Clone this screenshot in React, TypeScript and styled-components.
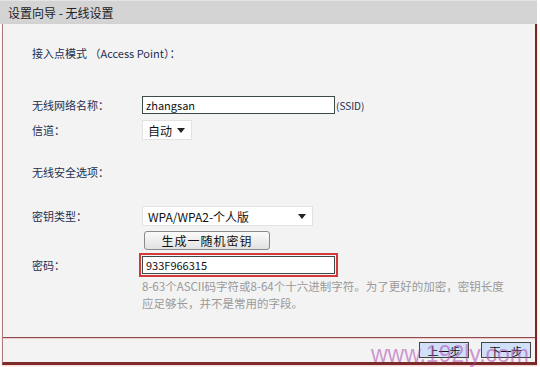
import * as React from 'react'
import styled, { createGlobalStyle } from 'styled-components'

const GlobalStyle = createGlobalStyle`
  html, body {
    margin: 0;
    padding: 0;
    background: #ffffff;
  }
  body {
    font-family: "SimSun", "Noto Sans CJK SC", "Liberation Sans", sans-serif;
  }
`

const Page = styled.div`
  width: 540px;
  height: 367px;
  position: relative;
  overflow: hidden;
  background: #ffffff;
`

const TitleBar = styled.div`
  width: 537px;
  height: 24px;
  box-sizing: border-box;
  background: #d4d4d4;
  border-top: 1px solid #e4e4e4;
  padding-left: 8px;
  display: flex;
  align-items: center;
  font-size: 12px;
  color: #222;
`

const Frame = styled.div`
  padding-left: 2px;
`

const Panel = styled.div`
  width: 535px;
  box-sizing: border-box;
  background: #f3f3f3;
  border-left: 1px solid #b07a7a;
  border-right: 2px solid #7c2424;
  border-bottom: 3px solid #7c2a2a;
  box-shadow: 0 1px 2px rgba(230, 150, 150, 0.5);
  display: flex;
  flex-direction: column;
`

const Content = styled.div`
  height: 313px;
  box-sizing: border-box;
  padding-left: 29px;
  display: flex;
  flex-direction: column;
`

const Row = styled.div<{ $top: number; $h: number }>`
  margin-top: ${(p) => p.$top}px;
  height: ${(p) => p.$h}px;
  display: grid;
  grid-template-columns: 110px 1fr;
  align-items: center;
`

const Label = styled.div`
  font-size: 11px;
  color: #1c2f50;
  white-space: nowrap;
`

const Field = styled.div`
  display: flex;
  align-items: center;
  height: 100%;
`

const TextBox = styled.div<{ $w: number }>`
  width: ${(p) => p.$w}px;
  height: 100%;
  box-sizing: border-box;
  background: #fff;
  border: 1px solid #3c4a4a;
  display: flex;
  align-items: center;
  padding-left: 3px;
  font-size: 11px;
  color: #111;
`

const Suffix = styled.span`
  font-size: 10px;
  color: #1c2f50;
  margin-left: 1px;
`

const Select = styled.div<{ $w: number }>`
  width: ${(p) => p.$w}px;
  height: 100%;
  box-sizing: border-box;
  background: #fff;
  border: 1px solid #e2e2e2;
  display: flex;
  align-items: center;
  justify-content: space-between;
  padding: 0 6px 0 5px;
  font-size: 12px;
  color: #111;
`

const Caret = styled.span`
  width: 0;
  height: 0;
  border-left: 4px solid transparent;
  border-right: 4px solid transparent;
  border-top: 5px solid #222;
`

const GenButton = styled.button`
  margin-left: 2px;
  width: 126px;
  height: 100%;
  box-sizing: border-box;
  border: 1px solid #8a8a8a;
  border-radius: 3px;
  background: linear-gradient(#fafafa, #e2e2e2);
  font-family: inherit;
  font-size: 12px;
  letter-spacing: 1px;
  color: #111;
  padding: 0;
`

const Highlight = styled.div`
  margin-left: -3px;
  width: 199px;
  height: 100%;
  box-sizing: border-box;
  border: 2px solid #d23a3a;
  padding: 1px;
  display: flex;
`

const Help = styled.div`
  margin-top: 3px;
  padding-left: 110px;
  font-size: 11.5px;
  line-height: 17px;
  color: #9a9a9a;
  white-space: nowrap;
`

const Footer = styled.div`
  height: 25px;
  box-sizing: border-box;
  border-top: 1px solid #8e4c4c;
  box-shadow: inset 0 1px 0 #f0c8c8;
  display: flex;
  align-items: center;
  justify-content: flex-end;
  gap: 12px;
  padding-right: 4px;
  position: relative;
`

const NavButton = styled.button`
  width: 50px;
  height: 16px;
  box-sizing: border-box;
  border: 1px solid #444;
  background: #cfe0f8;
  font-family: inherit;
  font-size: 11px;
  color: #111;
  padding: 0;
  position: relative;
  z-index: 1;
`

const Watermark = styled.div`
  position: absolute;
  right: 6px;
  bottom: -6px;
  font-family: "Liberation Sans", Arial, sans-serif;
  font-size: 23px;
  color: rgba(170, 70, 175, 0.55);
  pointer-events: none;
  z-index: 2;
`

export default function App() {
  return (
    <Page>
      <GlobalStyle />
      <TitleBar>设置向导 - 无线设置</TitleBar>
      <Frame>
        <Panel>
          <Content>
            <Row $top={19} $h={20}>
              <Label>接入点模式 （Access Point）：</Label>
            </Row>
            <Row $top={33} $h={16}>
              <Label>无线网络名称：</Label>
              <Field>
                <TextBox $w={193}>zhangsan</TextBox>
                <Suffix>(SSID)</Suffix>
              </Field>
            </Row>
            <Row $top={8} $h={20}>
              <Label>信道：</Label>
              <Field>
                <Select $w={50}>
                  自动 <Caret />
                </Select>
              </Field>
            </Row>
            <Row $top={22} $h={20}>
              <Label>无线安全选项：</Label>
            </Row>
            <Row $top={24} $h={20}>
              <Label>密钥类型：</Label>
              <Field>
                <Select $w={171}>
                  WPA/WPA2-个人版 <Caret />
                </Select>
              </Field>
            </Row>
            <Row $top={5} $h={19}>
              <span />
              <Field>
                <GenButton type="button">生成一随机密钥</GenButton>
              </Field>
            </Row>
            <Row $top={3} $h={22}>
              <Label>密码：</Label>
              <Field>
                <Highlight>
                  <TextBox $w={193}>933F966315</TextBox>
                </Highlight>
              </Field>
            </Row>
            <Help>
              8-63个ASCII码字符或8-64个十六进制字符。为了更好的加密，密钥长度
              <br />
              应足够长，并不是常用的字段。
            </Help>
          </Content>
          <Footer>
            <NavButton type="button">上一步</NavButton>
            <NavButton type="button">下一步</NavButton>
            <Watermark>www.192ly.com</Watermark>
          </Footer>
        </Panel>
      </Frame>
    </Page>
  )
}
